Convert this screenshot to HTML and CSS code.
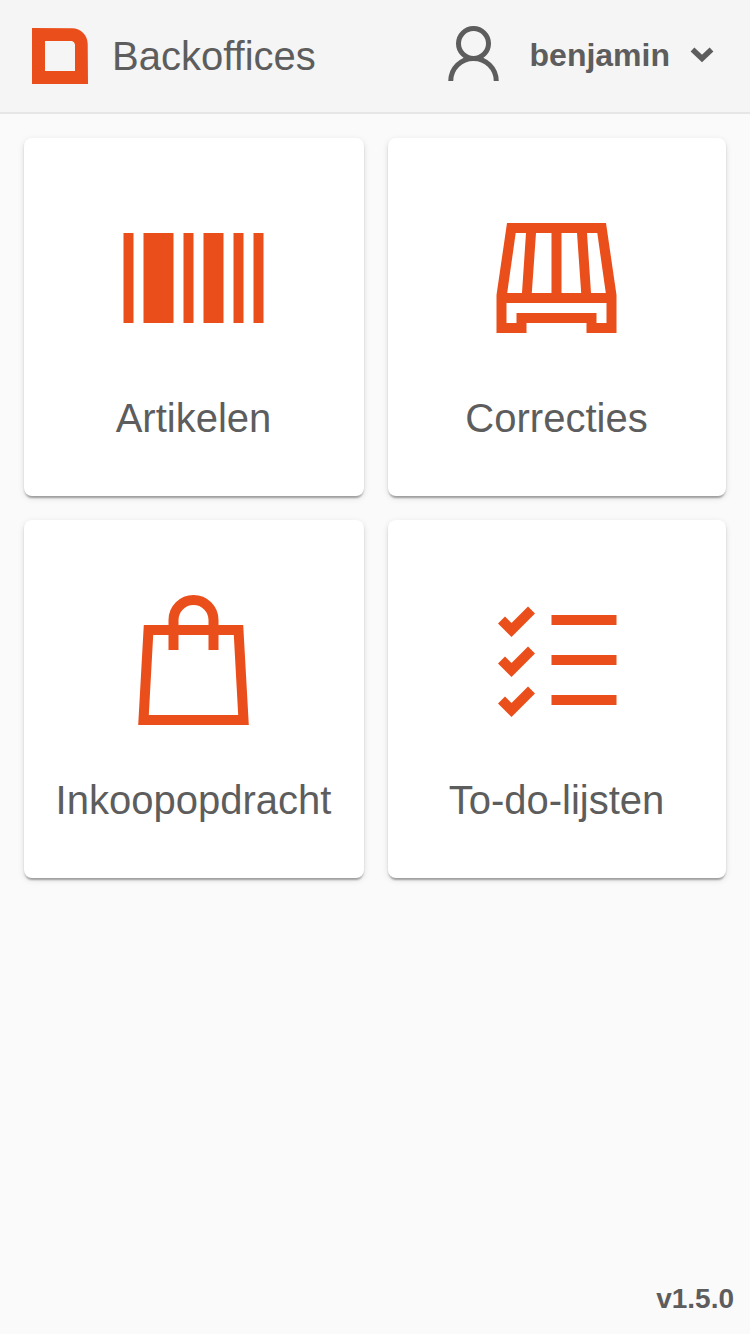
FILE: index.html
```html
<!doctype html>
<html lang="nl">
<head>
<meta charset="utf-8">
<title>Backoffices</title>
<meta name="viewport" content="width=device-width,initial-scale=1">
<link rel="stylesheet" href="styles.css">
</head>
<body>

<header class="topbar">
  <svg class="logo" viewBox="0 0 56 56">
    <path fill-rule="evenodd" d="M0 0 L40 .2 C49 .3 55.700 7.500 55.700 16 L56 56 H0 Z M13 13 V43 H43 V16.500 Q42.500 13.500 40 13 Z"/>
  </svg>
  <h1>Backoffices</h1>

  <button class="user">
    <svg class="user-icon" viewBox="0.5 1 52 56">
      <circle cx="26" cy="17.500" r="15"/>
      <path d="M3.250 55 A22.750 22.500 0 0 1 48.750 55"/>
    </svg>
    <span>benjamin</span>
    <svg class="chevron" viewBox="0 0 24 16">
      <path d="M2.500 2.500 L12 11.500 L21.500 2.500"/>
    </svg>
  </button>
</header>

<main class="tiles">
  <a class="tile">
    <svg viewBox="0.5 0 160 160">
      <path d="M10 35h10v90h-10z M30 35h30v90h-30z M70 35h10v90h-10z M90 35h20v90h-20z M120 35h10v90h-10z M140 35h10v90h-10z"/>
    </svg>
    <span>Artikelen</span>
  </a>

  <a class="tile">
    <svg viewBox="0.5 0 160 160">
      <path fill-rule="evenodd" d="M30.500 25 H129.500 L140 97 V135 H110 V125 H50 V135 H20 V97 Z
        M39.200 35 L30.700 95 H45.500 L49.500 35 Z
        M59.500 35 L55.300 95 H75 V35 Z
        M85 35 V95 H104.700 L100.500 35 Z
        M110.500 35 L114.500 95 H129.300 L120.800 35 Z
        M30 105 V125 H40 V115 H120 V125 H130 V105 Z"/>
    </svg>
    <span>Correcties</span>
  </a>

  <a class="tile">
    <svg viewBox="0.5 0 160 160">
      <path fill-rule="evenodd" d="M30.300 45 H129.700 L135.300 145 H24.700 Z M39.700 55 L35.300 135 H124.700 L120.300 55 Z"/>
      <path class="line" d="M60 70 V40 A20 20 0 0 1 100 40 V70"/>
    </svg>
    <span>Inkoopopdracht</span>
  </a>

  <a class="tile">
    <svg viewBox="0.5 0 160 160">
      <defs>
        <path id="check" d="M21.500 43.500 L28.500 36.500 L35 43 L51.500 26.500 L58.500 33.500 L35 57 Z M75 35 H140 V45 H75 Z"/>
      </defs>
      <use href="#check"/>
      <use href="#check" y="40"/>
      <use href="#check" y="80"/>
    </svg>
    <span>To-do-lijsten</span>
  </a>
</main>

<footer class="version">v1.5.0</footer>

</body>
</html>
```

FILE: styles.css
```css
*{box-sizing:border-box;margin:0;padding:0}
html,body{height:100%}
body{
  display:flex;
  flex-direction:column;
  font-family:Arial,"Liberation Sans",sans-serif;
  background:#fafafa;
  color:#5d5d5d;
}

/* top bar */
.topbar{
  display:flex;
  align-items:center;
  height:114px;
  padding:0 36px 0 32px;
  background:#f5f5f5;
  border-bottom:2px solid #e6e6e6;
}
.logo{width:56px;height:56px;fill:#ea4e1b}
h1{
  margin-left:24px;
  font-size:40px;
  font-weight:400;
  line-height:48px;
}
.user{
  display:flex;
  align-items:center;
  margin:0 0 2px auto;
  border:none;
  background:none;
  color:inherit;
  font:bold 32px/40px Arial,"Liberation Sans",sans-serif;
  cursor:pointer;
}
.user svg{fill:none;stroke:#5d5d5d;overflow:visible}
.user-icon{width:52px;height:56px;margin-right:30px;stroke-width:5}
.chevron{width:24px;height:16px;margin-left:20px;stroke-width:5.5}

/* tiles */
.tiles{
  display:grid;
  grid-template-columns:340px 338px;
  grid-auto-rows:358px;
  gap:24px;
  padding:24px;
}
.tile{
  display:flex;
  flex-direction:column;
  align-items:center;
  padding:60px 1px 0 0;
  border-radius:8px;
  background:#fff;
  box-shadow:0 4px 2px -2px rgba(0,0,0,.2),0 2px 2px rgba(0,0,0,.14),0 2px 6px rgba(0,0,0,.12);
  font-size:40px;
  line-height:48px;
  cursor:pointer;
}
.tile svg{width:160px;height:160px;margin-bottom:36px;fill:#ea4e1b}
.tile .line{fill:none;stroke:#ea4e1b;stroke-width:10}

.version{
  margin-top:auto;
  padding:0 16px 19px;
  text-align:right;
  font-size:28px;
  font-weight:bold;
  line-height:32px;
}
```
